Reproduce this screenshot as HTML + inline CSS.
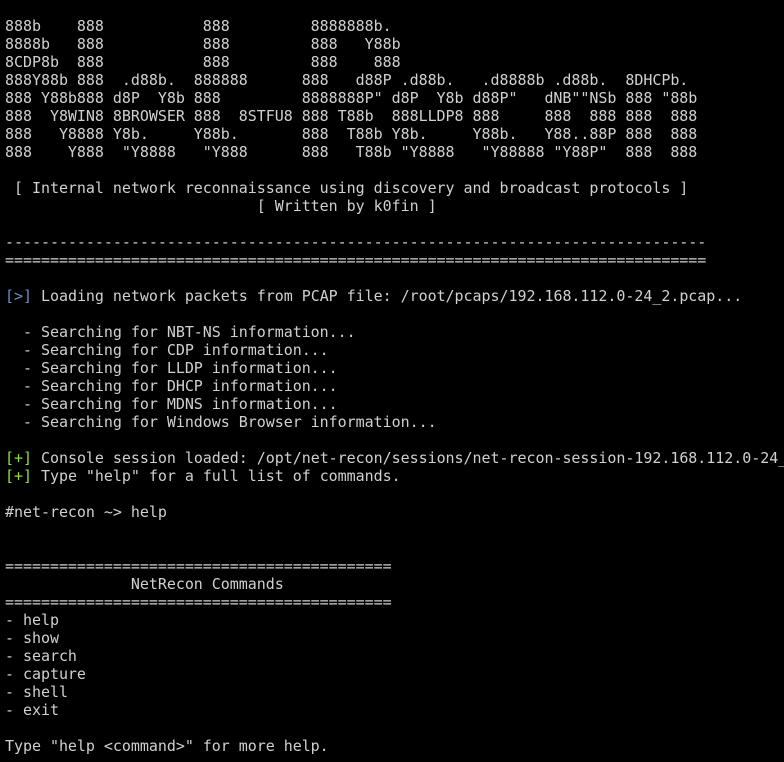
<!DOCTYPE html>
<html><head><meta charset="utf-8"><style>
html,body{margin:0;padding:0;background:#000;width:784px;height:762px;overflow:hidden}
pre{margin:0;position:absolute;left:5px;top:17px;font-family:"DejaVu Sans Mono","Liberation Mono",monospace;font-size:15px;letter-spacing:-0.04px;line-height:18px;color:#d0d0d0;white-space:pre}
.b{color:#6a8fc8}.g{color:#8ae234}
</style></head><body><pre>888b    888           888         8888888b.
8888b   888           888         888   Y88b
8CDP8b  888           888         888    888
888Y88b 888  .d88b.  888888      888   d88P .d88b.   .d8888b .d88b.  8DHCPb.
888 Y88b888 d8P  Y8b 888         8888888P" d8P  Y8b d88P"   dNB""NSb 888 "88b
888  Y8WIN8 8BROWSER 888  8STFU8 888 T88b  888LLDP8 888     888  888 888  888
888   Y8888 Y8b.     Y88b.       888  T88b Y8b.     Y88b.   Y88..88P 888  888
888    Y888  "Y8888   "Y888      888   T88b "Y8888   "Y88888 "Y88P"  888  888

 [ Internal network reconnaissance using discovery and broadcast protocols ]
                            [ Written by k0fin ]

------------------------------------------------------------------------------
==============================================================================

<span class="b">[&gt;]</span> Loading network packets from PCAP file: /root/pcaps/192.168.112.0-24_2.pcap...

  - Searching for NBT-NS information...
  - Searching for CDP information...
  - Searching for LLDP information...
  - Searching for DHCP information...
  - Searching for MDNS information...
  - Searching for Windows Browser information...

<span class="g">[+]</span> Console session loaded: /opt/net-recon/sessions/net-recon-session-192.168.112.0-24_
<span class="g">[+]</span> Type "help" for a full list of commands.

#net-recon ~&gt; help


===========================================
              NetRecon Commands
===========================================
- help
- show
- search
- capture
- shell
- exit

Type "help &lt;command&gt;" for more help.</pre></body></html>
